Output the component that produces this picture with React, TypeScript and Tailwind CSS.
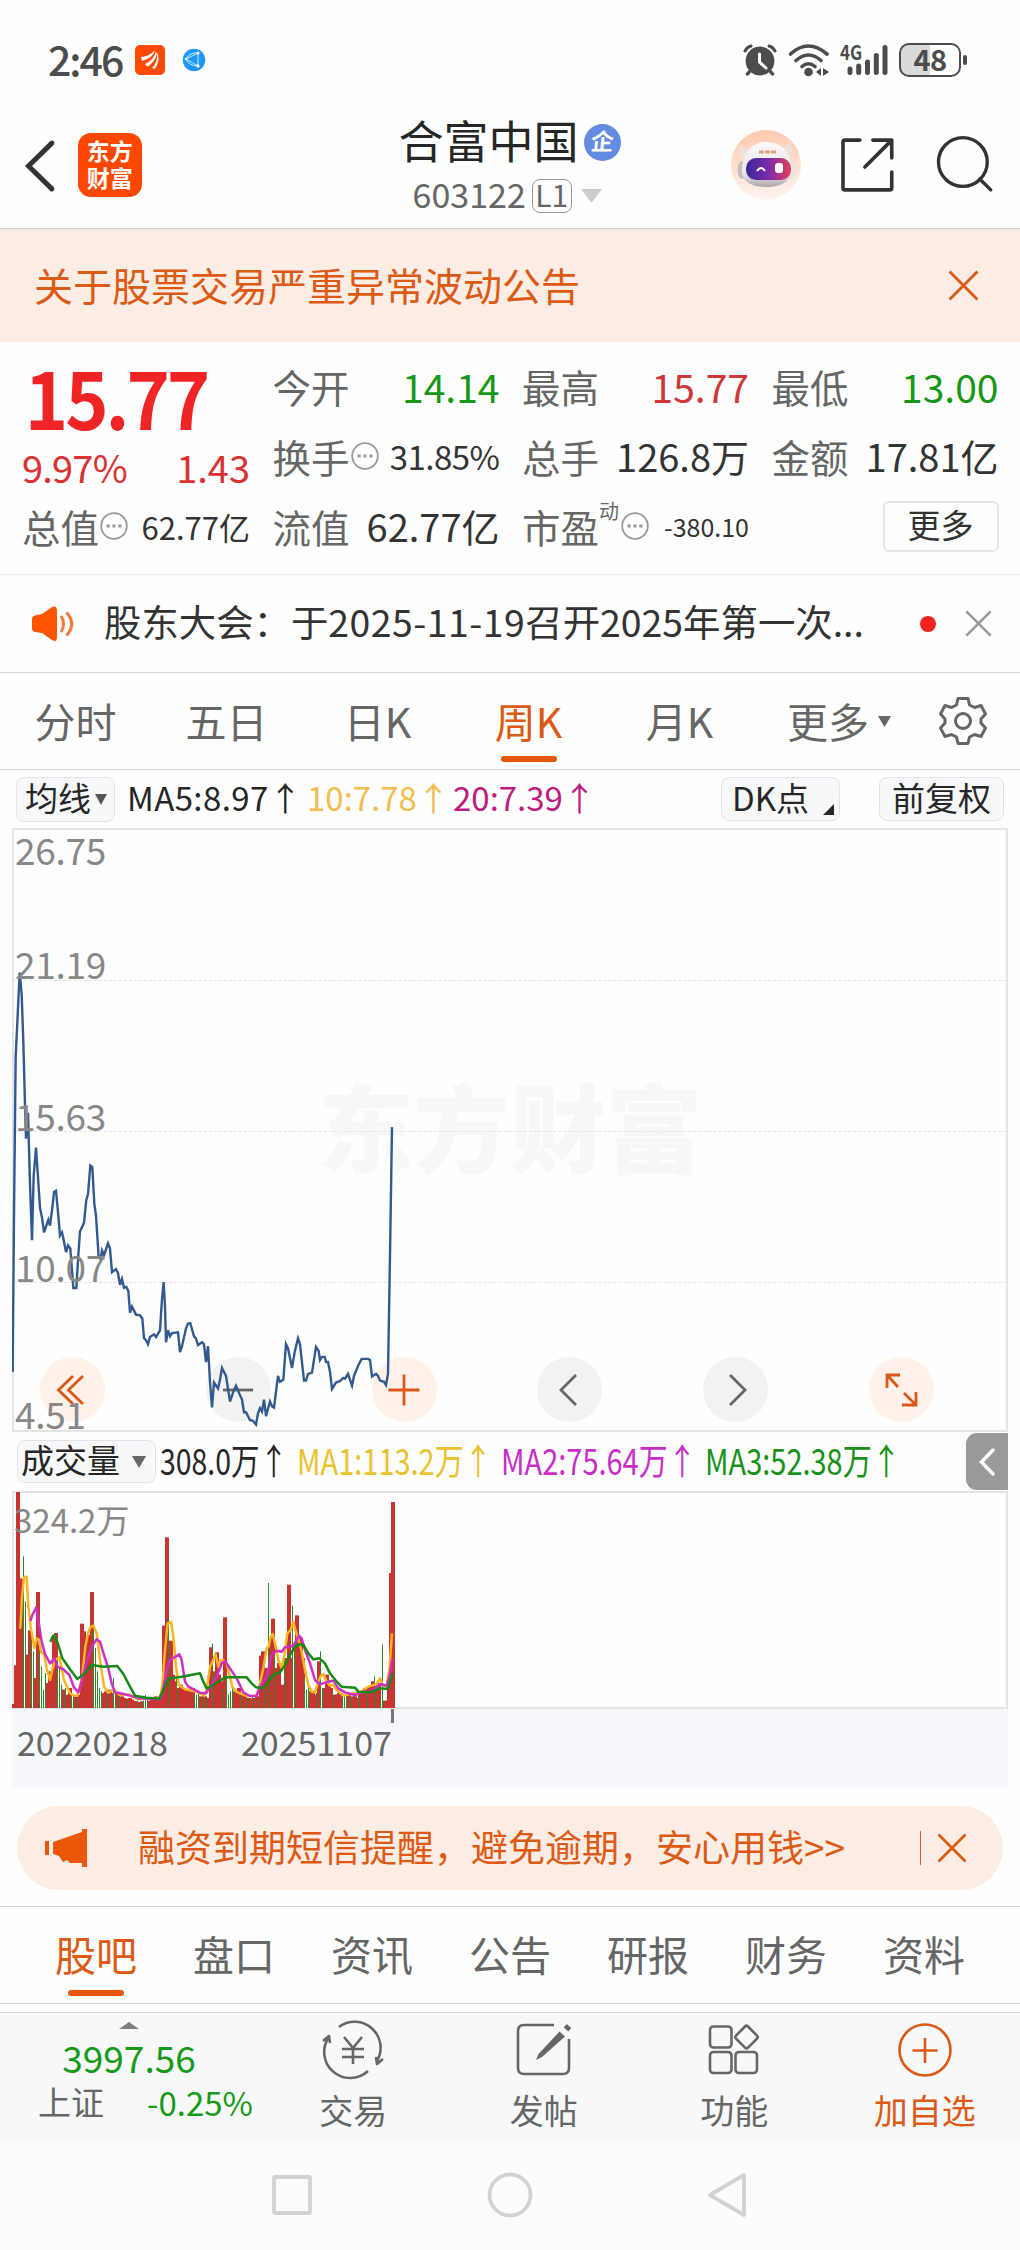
import React from "react"
import clsx from "clsx"

// weekly close line, in chart units (3 per px across)
const PRICE_LINE =
  "38,1395 42,1000 47,600 59,385 65,440 70,560 75,720 78,805 84,740 90,920 96,1062 101,900 108,828 113,890 120,980 126,1005 132,1042 145,1010 150,1025 157,980 162,940 168,937 175,1000 180,1050 186,1042 192,1065 198,1092 204,1075 211,1083 220,1183 229,1183 235,1100 240,1040 252,1018 259,960 264,945 271,873 277,877 283,970 288,1000 296,1105 302,1110 306,1088 312,1100 324,1070 330,1083 336,1143 348,1135 354,1145 360,1175 366,1160 372,1182 379,1180 385,1190 390,1245 396,1230 408,1250 420,1252 427,1260 432,1310 438,1315 444,1325 450,1307 462,1300 468,1307 480,1290 486,1210 491,1168 495,1230 498,1320 504,1290 510,1305 516,1297 534,1295 540,1345 546,1330 558,1285 564,1273 571,1272 582,1305 588,1310 594,1327 606,1320 612,1325 618,1370 624,1330 630,1420 636,1485 642,1422 654,1437 660,1415 666,1385 678,1405 690,1470 700,1445 708,1430 718,1450 726,1465 732,1497 738,1497 750,1517 758,1518 768,1528 774,1500 780,1487 786,1495 792,1465 798,1507 810,1470 816,1482 822,1485 834,1405 840,1420 850,1415 858,1325 864,1335 876,1385 884,1345 894,1310 900,1325 912,1417 918,1417 924,1400 936,1397 948,1332 956,1342 960,1365 966,1357 974,1357 978,1370 984,1370 990,1395 996,1438 1008,1422 1020,1418 1030,1410 1035,1412 1044,1400 1056,1430 1062,1405 1074,1380 1085,1362 1104,1362 1110,1365 1116,1407 1128,1400 1134,1405 1140,1417 1152,1420 1158,1428 1164,1400 1170,1100 1176,776"

// weekly volume, negative = down week
const VOLUMES = [
  12, 128, 648, 388, 388, -455, -320, 160, 233, -240, -170, 90, 348, -200, -125, -55, -105, 75, 110, 78, 220, 225, -150,
  -120, -70, 55, -60, 40, 60, -45, -35, 35, -30, 40, 253, 230, 215, 150, 220, 348, -240, -180, -110, -60, -50, 45, 50,
  -45, 55, 45, -90, -55, 45, -40, 35, 30, 28, -25, 30, 25, 20, 20, -22, 18, 20, -22, -40, -25, 22, 25, 20, 35, 25, 30,
  40, 247, 512, -270, 202, 100, 80, -100, 60, 70, 60, 50, 55, 50, 60, 60, -40, -40, -45, 35, -40, 35, -30, 30, 182,
  -193, 110, 167, 100, 80, -60, 272, -90, -40, -50, -60, 50, 45, 60, -35, 45, 35, -30, 30, 28, -35, 30, 35, -30, 157,
  170, -60, 120, -375, 200, 268, -150, 120, 135, 65, 70, -150, 150, 370, 150, -307, -200, 278, 215, 200, 150, -90, -55,
  -70, 50, 45, 40, -45, 140, -170, -60, 60, 100, 70, 60, -50, 40, 40, 45, 40, -45, -35, -40, 40, -35, 35, 35, 30, -40,
  45, 50, 60, -45, 60, 65, 80, -95, 65, 75, -30, -190, 22, 22, 60, 405, 618,
]

const VOLUME_MA = [
  {
    color: "#f9b520",
    points:
      "61,597 66,500 72,442 80,440 85,530 92,590 97,620 103,655 110,625 116,628 124,668 132,672 140,715 150,750 158,715 165,690 178,682 186,720 192,750 199,765 210,790 222,797 232,797 240,770 247,735 256,650 264,610 272,590 280,587 290,610 300,690 312,770 325,788 340,780 360,795 385,793 415,808 440,805 480,805 487,765 495,660 503,580 513,576 520,620 528,710 536,765 555,778 590,785 612,797 620,780 630,710 640,690 647,673 655,710 662,690 670,690 680,700 690,740 697,770 708,785 720,790 740,798 770,797 780,760 790,715 800,655 806,650 812,620 818,612 825,640 835,690 845,715 853,675 862,610 872,600 880,575 886,600 895,628 905,665 915,720 925,765 935,785 945,787 955,755 962,738 970,732 980,755 990,767 1000,765 1010,780 1030,797 1060,790 1080,787 1105,770 1130,762 1140,745 1148,765 1160,770 1168,720 1176,610",
  },
  {
    color: "#cc30c4",
    points:
      "91,573 97,555 109,532 115,570 125,635 135,672 150,700 163,685 172,710 190,718 208,735 222,772 235,787 245,755 258,700 275,650 290,628 300,635 312,675 325,715 335,760 345,787 375,793 420,805 480,808 487,790 500,720 510,690 538,673 545,690 555,755 565,770 600,788 618,790 630,770 650,740 665,700 675,693 690,715 710,745 730,787 750,798 770,798 780,770 800,740 815,675 830,662 845,665 855,652 880,648 897,617 905,625 915,660 930,700 945,750 960,763 985,755 1000,752 1015,775 1035,787 1065,795 1090,785 1115,782 1140,762 1160,767 1168,740 1177,685",
  },
  {
    color: "#168a16",
    points:
      "151,635 158,620 165,617 175,645 187,685 210,718 232,747 255,730 275,705 310,710 352,708 370,732 390,770 405,797 440,803 477,806 490,780 500,755 512,745 545,740 600,730 610,755 620,775 640,765 675,742 740,742 755,760 768,772 790,775 805,755 820,735 840,727 855,705 870,675 885,650 897,643 910,645 925,670 940,688 958,685 975,700 990,730 1010,755 1025,770 1065,773 1075,785 1110,787 1140,775 1163,777 1170,755 1177,730",
  },
]

function StatusBar() {
  return (
    <div className="flex h-[116px] items-center pt-1 pl-[48px] pr-[53px] text-[#4c4c4c]">
      <span className="w-[87px] text-[41px] leading-none tracking-[-2px] font-medium -mt-1">2:46</span>
      <svg className="h-[30px] w-[30px]" viewBox="0 0 30 30">
        <rect width="30" height="30" rx="5" fill="#ff4a05" />
        <path d="M6 12Q15 11 20 5Q18 13 7 16ZM10 19Q19 15 21 6Q24 11 15 20Q12 23 10 19ZM17 23Q23 17 22 8Q26 14 20 24Z" fill="#fff" />
      </svg>
      <svg className="ml-[17px] h-6 w-6" viewBox="0 0 24 24">
        <circle cx="12" cy="12" r="11.2" fill="#2196fb" />
        <path d="M4 11L16 5M4 11L16 18M16 5V18M16 5Q8 4 4 11Q7 18 16 18" stroke="#bff1ff" fill="none" />
        <circle cx="16" cy="5" r="1.5" fill="#fff" />
        <circle cx="4" cy="11" r="1.3" fill="#fff" />
        <circle cx="16" cy="18" r="1.7" fill="#fff" />
      </svg>
      <div className="flex-1" />
      <svg className="h-[34px] w-[34px]" viewBox="0 0 34 34" stroke="#4c4c4c" strokeLinecap="round">
        <circle cx="17" cy="18" r="14.4" fill="#4c4c4c" stroke="none" />
        <path d="M2 8Q4 4 8 3M32 8Q30 4 26 3" strokeWidth="3" fill="none" />
        <path d="M7 28L4.500 31M27 28L29.500 31" strokeWidth="3.500" />
        <path d="M16.500 11V19L23 25" stroke="#fff" strokeWidth="3" fill="none" />
      </svg>
      <svg className="ml-[11px] h-[34px] w-[42px]" viewBox="0 0 42 34" fill="none" stroke="#4c4c4c" strokeWidth="3.600" strokeLinecap="round">
        <path d="M2.500 11Q20 -5 39 11M8 17.500Q20.500 6.500 33 17.500M14 23.500Q20.500 18 27 23.500" />
        <circle cx="20.500" cy="29" r="4.300" fill="#4c4c4c" stroke="none" />
        <path d="M33 25V33L28 29ZM35 25V33L41 29Z" fill="#4c4c4c" stroke="none" />
      </svg>
      <div className="relative ml-[10px] h-[34px] w-[49px]">
        <span className="absolute left-0 -top-[1px] origin-left scale-x-[0.850] text-[20px] leading-[20px] font-bold">4G</span>
        <svg className="h-[34px] w-[49px]" viewBox="0 0 49 34" stroke="#4c4c4c" strokeWidth="5" strokeLinecap="round">
          <path d="M10 26V29.500M18.700 23V29.500M27.500 19V29.500M36.300 12.500V29.500M45 4.500V29.500" />
        </svg>
      </div>
      <div className="ml-[10px] flex h-[34px] w-[62px] items-center justify-center rounded-[10px] border-2 border-[#4c4c4c] bg-[linear-gradient(90deg,#dadada_50%,#fff_50%)] text-[29px] leading-none font-bold tracking-[-0.500px]">
        <span className="-mt-[3px]">48</span>
      </div>
      <div className="ml-[2px] h-[10px] w-1 rounded-full bg-[#4c4c4c]" />
    </div>
  )
}

function RobotAvatar() {
  return (
    <svg className="h-[70px] w-[70px]" viewBox="0 0 70 70">
      <defs>
        <linearGradient id="halo" x1="0" y1="0" x2="0" y2="1">
          <stop offset="0" stopColor="#ffc9ae" />
          <stop offset="1" stopColor="#fff4ee" />
        </linearGradient>
        <linearGradient id="visor">
          <stop offset="0" stopColor="#3a2a9c" />
          <stop offset="0.500" stopColor="#7b2aa8" />
          <stop offset="1" stopColor="#e2405a" />
        </linearGradient>
        <linearGradient id="shell" x1="0" y1="0" x2="0" y2="1">
          <stop offset="0" stopColor="#fbf8f7" />
          <stop offset="0.700" stopColor="#ebe6e8" />
          <stop offset="1" stopColor="#aba4aa" />
        </linearGradient>
      </defs>
      <circle cx="35" cy="35" r="35" fill="url(#halo)" />
      <path d="M9 15Q7 26 14 29L22 19Q13 20 9 15ZM58 11Q64 23 57 28L48 18Q57 17 58 11Z" fill="#efe0dc" />
      <ellipse cx="11" cy="40" rx="4.500" ry="9" fill="#c3bdc2" />
      <ellipse cx="61" cy="40" rx="4.500" ry="9" fill="#e9e2e4" />
      <path d="M35 12C52 12 60 24 61 39C61 50 52 57 35 57C18 57 10 50 11 39C12 24 20 12 35 12Z" fill="url(#shell)" />
      <path d="M28 22H46" stroke="#d9a27c" strokeWidth="3" strokeDasharray="5 1" />
      <rect x="15" y="28" width="45" height="22" rx="10" fill="url(#visor)" />
      <path d="M26 41Q30 35 34 41" stroke="#fff" strokeWidth="2" fill="none" />
      <rect x="44" y="33" width="8" height="10" rx="3" fill="#fff" />
    </svg>
  )
}

function Header() {
  return (
    <div className="flex h-[113px] items-start border-b border-[#d4d4d8] pl-6 pr-[26px]">
      <svg className="mt-[23px] h-[54px] w-8" viewBox="0 0 32 54" fill="none" stroke="#333" strokeWidth="5" strokeLinecap="round">
        <path d="M28 4L4.500 27L28 50" />
      </svg>
      <div className="mt-[17px] ml-[22px] flex h-16 w-16 flex-col items-center justify-center rounded-[13px] bg-[#ff4700] pb-[3px] text-[23px] leading-[27px] font-bold text-white">
        <span>东方</span>
        <span>财富</span>
      </div>
      <div className="ml-[257px] flex w-[224px] flex-col">
        <div className="flex items-center">
          <span className="text-[45px] leading-[50px] text-[#262626] -mt-[1px]">合富中国</span>
          <div className="mt-[3px] ml-[5px] flex h-[37px] w-[37px] items-center justify-center rounded-full bg-[#648be2] pb-[3px] text-[23px] leading-none font-bold text-white">
            <span className="-skew-x-6">企</span>
          </div>
        </div>
        <div className="mt-[12px] flex items-center pl-[14px] text-[34px] leading-[42px] text-[#666]">
          <span className="-mt-1">603122</span>
          <span className="ml-[6px] flex h-[34px] w-10 items-center justify-center rounded-lg border border-[#999] pb-[5px] text-[30px] leading-none">
            L1
          </span>
          <svg className="ml-[9px] h-[14px] w-[21px]" viewBox="0 0 21 14">
            <path d="M0 0H21L10.500 14Z" fill="#ccc" />
          </svg>
        </div>
      </div>
      <div className="mt-[14px] ml-[109px]">
        <RobotAvatar />
      </div>
      <svg className="mt-[20px] ml-[38px] h-[58px] w-[58px]" viewBox="0 0 58 58" fill="none" stroke="#333" strokeWidth="3.600" strokeLinecap="round" strokeLinejoin="round">
        <path d="M21 4H6Q4 4 4 6V52Q4 54 6 54H51Q53 54 53 52V36M34 4H53V22M53 4L26 31" />
      </svg>
      <svg className="mt-[19px] ml-[38px] h-[60px] w-[60px]" viewBox="0 0 60 60" fill="none" stroke="#333" strokeWidth="3.400" strokeLinecap="round">
        <circle cx="29" cy="27" r="24.500" />
        <path d="M46 44L57 55" />
      </svg>
    </div>
  )
}

function Cross({ className }: { className?: string }) {
  return (
    <svg className={className} viewBox="0 0 30 30" fill="none" stroke="currentColor" strokeWidth="2.800">
      <path d="M1.500 1.500L28.500 28.500M28.500 1.500L1.500 28.500" />
    </svg>
  )
}

function Banner() {
  return (
    <div className="flex h-[113px] items-center justify-between bg-[#fcede4] pl-[34px] pr-[41px] text-[39px] leading-none text-[#db5a15]">
      <span className="-mt-[3px]">关于股票交易严重异常波动公告</span>
      <Cross className="h-[31px] w-[31px]" />
    </div>
  )
}

function InfoDots() {
  return (
    <svg className="h-[28px] w-[28px] shrink-0" viewBox="0 0 28 28">
      <circle cx="14" cy="14" r="12.800" fill="none" stroke="#999" strokeWidth="1.800" />
      <path d="M6.500 14h3.200M12.400 14h3.200M18.300 14h3.200" stroke="#999" strokeWidth="3" />
    </svg>
  )
}

interface QuoteCellProps {
  label: string
  value: string
  sup?: string
  info?: boolean
  valueClass?: string
}

function QuoteCell({ label, value, sup, info, valueClass = "text-[38px] text-[#333]" }: QuoteCellProps) {
  return (
    <div className="flex h-[70px] items-center leading-none">
      <span className="text-[38.500px] text-[#666] whitespace-nowrap">{label}</span>
      {sup && <span className="mb-[30px] text-[20px] text-[#666]">{sup}</span>}
      {info && (
        <span className={sup ? "ml-[2px]" : "ml-[1px]"}>
          <InfoDots />
        </span>
      )}
      <span className={clsx("ml-auto whitespace-nowrap", valueClass)}>{value}</span>
    </div>
  )
}

function Quote() {
  return (
    <div className="h-[233px] border-b border-[#ececec] pl-[22px] pr-[21px]">
      <div className="grid grid-cols-[228px_227px_227px_227px] gap-x-[22.500px] pt-[9px]">
        <div className="row-span-2 flex h-[140px] flex-col">
          <span className="origin-left scale-x-[0.920] pl-[3px] text-[80px] leading-[88px] font-bold tracking-[-3.300px] text-[#f02424]">
            15.77
          </span>
          <div className="mt-[3px] flex justify-between text-[38px] leading-[50px] text-[#d93232]">
            <span className="tracking-[-0.800px]">9.97%</span>
            <span>1.43</span>
          </div>
        </div>
        <QuoteCell label="今开" value="14.14" valueClass="text-[39px] text-[#179617]" />
        <QuoteCell label="最高" value="15.77" valueClass="text-[39px] text-[#d03636]" />
        <QuoteCell label="最低" value="13.00" valueClass="text-[39px] text-[#179617]" />
        <QuoteCell label="换手" info value="31.85%" valueClass="text-[33px] tracking-[-0.500px] text-[#333]" />
        <QuoteCell label="总手" value="126.8万" />
        <QuoteCell label="金额" value="17.81亿" />
        <QuoteCell label="总值" info value="62.77亿" valueClass="text-[31px] text-[#333]" />
        <QuoteCell label="流值" value="62.77亿" />
        <QuoteCell label="市盈" sup="动" info value="-380.10" valueClass="text-[25px] text-[#333]" />
        <div className="flex h-[70px] items-center justify-end">
          <button className="h-[51px] w-[116px] rounded-md border-2 border-[#e6e6e6] pb-1 text-[33px] leading-none text-[#333]">
            更多
          </button>
        </div>
      </div>
    </div>
  )
}

function NewsRow() {
  return (
    <div className="flex h-[98px] items-center border-b border-[#d4d4d8] pl-8 pr-[28px]">
      <svg className="h-[36px] w-[42px]" viewBox="0 0 42 36">
        <path d="M0 13Q0 10 3 9.500L10 8L20 1Q25 -1 25 5V31Q25 37 20 34L10 27L3 26Q0 25.500 0 22Z" fill="#ff5500" />
        <path d="M29 10Q34 18 29 26M34.500 6.500Q45 18 34.500 29.500" stroke="#ee7a3c" strokeWidth="3" fill="none" />
      </svg>
      <span className="ml-[30px] -mt-1 text-[37.400px] leading-none whitespace-nowrap text-[#333]">
        股东大会：于<span className="tracking-[0.500px]">2025-11-19</span>召开2025年第一次...
      </span>
      <span className="ml-auto h-4 w-4 rounded-full bg-[#ee2222]" />
      <Cross className="ml-[29px] h-[27px] w-[27px] text-[#999]" />
    </div>
  )
}

function KTabs() {
  const tabs = ["分时", "五日", "日K", "周K", "月K"]
  return (
    <div className="flex h-[97px] items-center border-b border-[#d4d4d8] text-[41px] leading-none text-[#666]">
      {tabs.map((tab) => (
        <div
          key={tab}
          className={clsx("relative flex h-full w-[151px] items-center justify-center pb-[2px]", tab === "周K" && "text-[#db5a15]")}>
          <span>{tab}</span>
          {tab === "周K" && <div className="absolute bottom-[7px] h-[6px] w-[56px] rounded-full bg-[#e65807]" />}
        </div>
      ))}
      <span className="ml-8 mb-[2px]">更多</span>
      <svg className="ml-[9px] h-[11px] w-[13px]" viewBox="0 0 13 11">
        <path d="M0 0H13L6.500 11Z" fill="#666" />
      </svg>
      <svg className="ml-[47px] h-[50px] w-[50px]" viewBox="0 0 50 50" fill="none" stroke="#666" strokeWidth="3" strokeLinejoin="round">
        <path d="M20 2.500H30L31.500 9L36.500 11.500L43 9.500L47.500 18L43 23V27L47.500 32L43 40.500L36.500 38.500L31.500 41L30 47.500H20L18.500 41L13.500 38.500L7 40.500L2.500 32L7 27V23L2.500 18L7 9.500L13.500 11.500L18.500 9Z" />
        <circle cx="25" cy="25" r="7.500" />
      </svg>
    </div>
  )
}

function IndicatorBar() {
  return (
    <div className="flex h-[58px] items-center pl-4 pr-4 text-[33px] leading-none whitespace-nowrap text-[#262626]">
      <div className="flex h-[45px] w-[99px] items-center rounded-lg border border-[#e1e3e8] bg-[#f7f8fa] pl-2">
        <span className="-mt-1">均线</span>
        <svg className="ml-1 h-[11px] w-[12px]" viewBox="0 0 12 11">
          <path d="M0 0H12L6 11Z" fill="#555" />
        </svg>
      </div>
      <div className="-mt-[4px] ml-[12px] flex">
        <span className="w-[180px] tracking-[0.400px]">MA5:8.97↑</span>
        <span className="w-[146px] text-[#f3bd4e]">10:7.78↑</span>
        <span className="text-[#bc1c80]">20:7.39↑</span>
      </div>
      <div className="relative ml-auto flex h-11 w-[119px] items-center rounded-lg border border-[#e1e3e8] bg-[#f7f8fa] pl-[10px]">
        <span className="-mt-1">DK点</span>
        <svg className="absolute right-[5px] bottom-[5px] h-[11px] w-[11px]" viewBox="0 0 11 11">
          <path d="M11 0V11H0Z" fill="#262626" />
        </svg>
      </div>
      <div className="ml-[39px] flex h-11 w-[125px] items-center justify-center rounded-lg border border-[#e1e3e8] bg-[#f7f8fa]">
        <span className="-mt-1">前复权</span>
      </div>
    </div>
  )
}

function RoundButton({ accent, children }: { accent?: boolean; children: React.ReactNode }) {
  return (
    <div className={clsx("flex h-[65px] w-[65px] items-center justify-center rounded-full", accent ? "bg-[#fff0e8]" : "bg-[#f2f2f2]")}>
      <svg
        className="h-10 w-10"
        viewBox="0 0 40 40"
        fill="none"
        stroke={accent ? "#d9591a" : "#666"}
        strokeWidth="2.800">
        {children}
      </svg>
    </div>
  )
}

function PriceChart() {
  return (
    <div className="relative mx-3 h-[604px] border-2 border-[#e4e4e4] text-[37px] leading-[40px] text-[#888]">
      <div className="absolute inset-0 flex items-center justify-center pb-[12px] text-[96px] leading-none font-black text-[#f7f7f7]">
        东方财富
      </div>
      <div className="absolute inset-x-0 top-[150px] border-t border-dashed border-[#e4e4e4]" />
      <div className="absolute inset-x-0 top-[301px] border-t border-dashed border-[#e4e4e4]" />
      <div className="absolute inset-x-0 top-[452px] border-t border-dashed border-[#e4e4e4]" />
      <div className="absolute top-[527px] left-[26px] flex gap-[100.800px]">
        <RoundButton accent>
          <path d="M20 6L5.500 20L20 34M30 6L15.500 20L30 34" />
        </RoundButton>
        <RoundButton>
          <path d="M5 20H35" />
        </RoundButton>
        <RoundButton accent>
          <path d="M4.500 20H35.500M20 4.500V35.500" />
        </RoundButton>
        <RoundButton>
          <path d="M26 5L11 20L26 35" />
        </RoundButton>
        <RoundButton>
          <path d="M14 5L29 20L14 35" />
        </RoundButton>
        <RoundButton accent>
          <path d="M6 18V5H19M6 5L17 17M35 22V35H21M35 35L23 23" />
        </RoundButton>
      </div>
      <svg className="absolute -top-[1px] -left-[2px] h-[603px] w-[996px]" viewBox="36 22 2988 1525" preserveAspectRatio="none">
        <polyline points={PRICE_LINE} fill="none" stroke="#335a8e" strokeWidth="2.400" vectorEffect="non-scaling-stroke" />
      </svg>
      <div className="tracking-[-0.300px]">
        <span className="absolute -top-[1px] left-[1px]">26.75</span>
        <span className="absolute top-[113px] left-[1px]">21.19</span>
        <span className="absolute top-[265px] left-[1px]">15.63</span>
        <span className="absolute top-[416px] left-[1px]">10.07</span>
        <span className="absolute top-[563px] left-[1px]">4.51</span>
      </div>
    </div>
  )
}

function VolumeBar() {
  return (
    <div className="flex h-[59px] items-center pl-[17px] pr-3 whitespace-nowrap text-[#262626]">
      <div className="flex h-[43px] w-[139px] items-center rounded-lg border border-[#e1e3e8] bg-[#f7f8fa] pl-[3px] text-[33px] leading-none">
        <span className="-mt-1">成交量</span>
        <svg className="ml-3 h-3 w-[14px]" viewBox="0 0 14 12">
          <path d="M0 0H14L7 12Z" fill="#666" />
        </svg>
      </div>
      <div className="-mt-[5px] ml-[4px] flex text-[36px] leading-none">
        <div className="w-[137px]">
          <span className="inline-block origin-left scale-x-[0.790]">308.0万↑</span>
        </div>
        <div className="w-[204px] text-[#eac22e]">
          <span className="inline-block origin-left scale-x-[0.805]">MA1:113.2万↑</span>
        </div>
        <div className="w-[204px] text-[#c62fc6]">
          <span className="inline-block origin-left scale-x-[0.805]">MA2:75.64万↑</span>
        </div>
        <div className="w-[200px] text-[#179117]">
          <span className="inline-block origin-left scale-x-[0.805]">MA3:52.38万↑</span>
        </div>
      </div>
      <div className="ml-auto flex h-[57px] w-[42px] items-center justify-center rounded-l-[11px] bg-[#999]">
        <svg className="h-7 w-4" viewBox="0 0 16 28" fill="none" stroke="#fff" strokeWidth="3.500" strokeLinecap="round">
          <path d="M14 2L2.500 14L14 26" />
        </svg>
      </div>
    </div>
  )
}

function VolumeChart() {
  return (
    <div className="px-3">
      <div className="relative h-[218px] border-2 border-[#e4e4e4]">
        <svg className="absolute -top-[1px] -left-[2px] h-[216px] w-[996px]" viewBox="36 186 2988 648">
          {VOLUMES.map((v, i) => {
            const h = Math.abs(v)
            const up = v > 0
            // keep every bar on whole pixels, 3 units each
            const x = Math.round((39 + i * 6.02) / 3) * 3
            return (
              <rect
                key={i}
                x={up ? x - 3 : x}
                y={834 - h}
                width={up ? 12 : 3}
                height={h}
                fill={up ? "#c73431" : "#2c8a2c"}
              />
            )
          })}
          {VOLUME_MA.map((ma) => (
            <polyline key={ma.color} points={ma.points} fill="none" stroke={ma.color} strokeWidth="7.500" strokeLinejoin="round" />
          ))}
        </svg>
        <span className="absolute top-[6px] left-0 text-[33px] leading-[40px] text-[#888]">324.2万</span>
      </div>
      <div className="flex h-[80px] bg-[#f7f8fb] pl-[5px] text-[34px] leading-[40px] text-[#666]">
        <span className="mt-[13px] w-[224px]">20220218</span>
        <span className="mt-[13px]">20251107</span>
        <div className="-ml-[1px] h-[14px] w-[3px] bg-[#777]" />
      </div>
    </div>
  )
}

function Promo() {
  return (
    <div className="mx-[17px] mt-[17px] mb-[16px] flex h-[84px] items-center rounded-full bg-[#fcede4] pl-[28px] pr-[36px] text-[#db5a15]">
      <svg className="h-[38px] w-[43px]" viewBox="0 0 43 38" fill="#eb5704">
        <path d="M0 12H4V26H0ZM8 13L37 3V0H42V38H37V34H25L22 31L18 33L14 27L8 25Z" />
      </svg>
      <span className="-mt-[4px] ml-[50px] text-[37px] leading-none whitespace-nowrap">
        融资到期短信提醒，避免逾期，安心用钱&gt;&gt;
      </span>
      <div className="ml-auto h-[34px] w-[1px] bg-[#db5a15]" />
      <Cross className="ml-[16px] h-[30px] w-[30px]" />
    </div>
  )
}

function InfoTabs() {
  const tabs = ["股吧", "盘口", "资讯", "公告", "研报", "财务", "资料"]
  return (
    <div className="flex h-[98px] border-y border-[#d4d4d8] pl-[27px] text-[41px] leading-none text-[#666]">
      {tabs.map((tab, i) => (
        <div key={tab} className={clsx("relative flex w-[138px] items-center justify-center pb-[3px]", i === 0 && "text-[#db5a15]")}>
          <span>{tab}</span>
          {i === 0 && <div className="absolute bottom-[7px] h-[6px] w-[56px] rounded-full bg-[#e65807]" />}
        </div>
      ))}
    </div>
  )
}

function ToolItem({ label, accent, children }: { label: string; accent?: boolean; children: React.ReactNode }) {
  return (
    <div className={clsx("flex w-[190.500px] flex-col items-center", accent ? "text-[#db5a15]" : "text-[#666]")}>
      <svg
        className="mt-[7px] h-[60px] w-[66px]"
        viewBox="0 0 66 60"
        fill="none"
        stroke="currentColor"
        strokeWidth="2.600"
        strokeLinejoin="round">
        {children}
      </svg>
      <span className="mt-[10px] text-[34px] leading-[40px]">{label}</span>
    </div>
  )
}

function BottomBar() {
  return (
    <div className="mt-[8px] flex h-[128px] border-t border-[#d4d4d8] bg-[#f7f8fa]">
      <div className="flex w-[258px] flex-col items-center">
        <svg className="mt-[9px] h-[7px] w-5" viewBox="0 0 20 7">
          <path d="M10 0L20 7H0Z" fill="#808080" />
        </svg>
        <span className="mt-[5px] text-[37px] leading-[46px] text-[#179a17]">3997.56</span>
        <div className="flex gap-[43px] self-start pl-[38px] text-[33px] leading-[42px]">
          <span className="text-[#666]">上证</span>
          <span className="mt-[1px] text-[#179a17]">-0.25%</span>
        </div>
      </div>
      <ToolItem label="交易">
        <path d="M19 7A26 26 0 0 1 57 41M48 51A26 26 0 0 1 9 17M3 21L9 16L10 23M63 39L57 44L56 37" />
        <path d="M24 17L33 28L42 17M33 28V44M22 29H44M22 37H44" />
      </ToolItem>
      <ToolItem label="发帖">
        <path d="M43 5H13Q7 5 7 11V48Q7 54 13 54H52Q58 54 58 48V19" />
        <path d="M55 9.500L58 6" strokeWidth="6" />
        <path d="M48.500 11.500L54 16.500L31 37L25 40L27.500 34Z" fill="currentColor" stroke="none" />
      </ToolItem>
      <ToolItem label="功能">
        <rect x="9" y="6.500" width="21.500" height="21" rx="3.500" />
        <rect x="9" y="32" width="21.500" height="21" rx="3.500" />
        <rect x="34.500" y="32" width="21.500" height="21" rx="3.500" />
        <path d="M44 6.500Q45.500 5 47 6.500L56 15.700Q57.500 17.200 56 18.700L47 27.700Q45.500 29.200 44 27.700L35 18.700Q33.500 17.200 35 15.700Z" />
      </ToolItem>
      <ToolItem label="加自选" accent>
        <circle cx="33" cy="30" r="25.500" />
        <path d="M20.500 30.500H45.500M33 18V43" />
      </ToolItem>
    </div>
  )
}

function SystemNav() {
  return (
    <div className="flex h-[110px] items-center justify-center gap-[172px] bg-[#fcfcfc]">
      <svg className="h-[46px] w-[46px]" viewBox="0 0 46 46" fill="none" stroke="#d2d2d2" strokeWidth="3.800">
        <rect x="5" y="5" width="36" height="36" rx="1" />
      </svg>
      <svg className="h-[46px] w-[46px]" viewBox="0 0 46 46" fill="none" stroke="#d2d2d2" strokeWidth="3.800">
        <circle cx="23" cy="23" r="20.500" />
      </svg>
      <svg className="h-[46px] w-[46px]" viewBox="0 0 46 46" fill="none" stroke="#d2d2d2" strokeWidth="3.800" strokeLinejoin="round">
        <path d="M39 3V43L5 23Z" />
      </svg>
    </div>
  )
}

export default function App() {
  return (
    <div className="flex h-[2250px] w-[1020px] flex-col overflow-hidden bg-[#fefefe] font-['Noto_Sans_CJK_SC',sans-serif]">
      <StatusBar />
      <Header />
      <Banner />
      <Quote />
      <NewsRow />
      <KTabs />
      <IndicatorBar />
      <PriceChart />
      <VolumeBar />
      <VolumeChart />
      <Promo />
      <InfoTabs />
      <BottomBar />
      <SystemNav />
    </div>
  )
}
